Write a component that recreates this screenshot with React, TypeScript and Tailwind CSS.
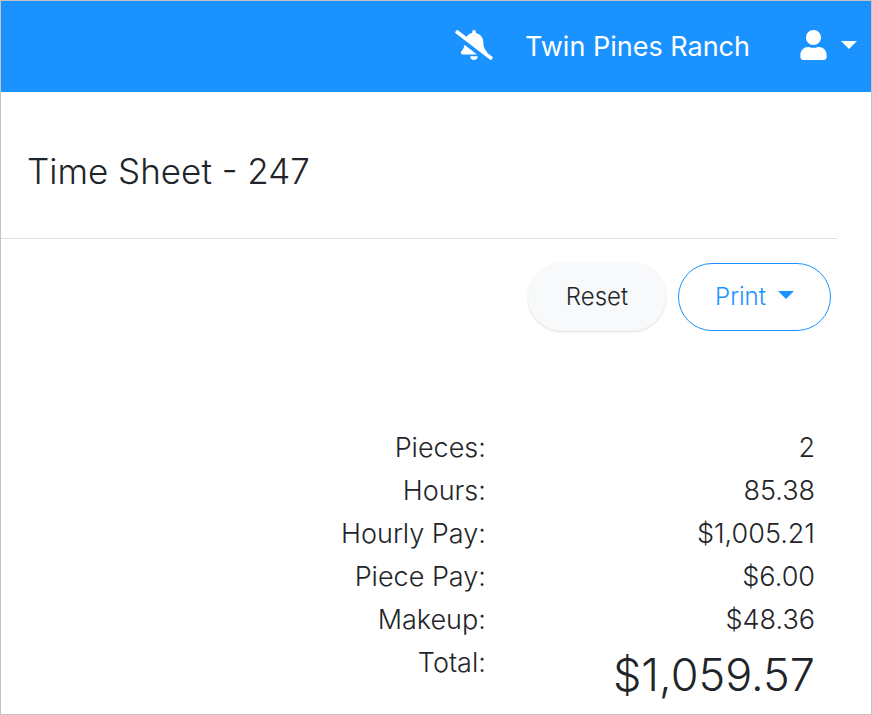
import { FaBellSlash, FaUser } from 'react-icons/fa';

const SUMMARY = [
  { label: 'Pieces:', value: '2' },
  { label: 'Hours:', value: '85.38' },
  { label: 'Hourly Pay:', value: '$1,005.21' },
  { label: 'Piece Pay:', value: '$6.00' },
  { label: 'Makeup:', value: '$48.36' },
];

function Caret() {
  return (
    <svg viewBox="0 0 16 8" className="mb-1 h-2 w-4" fill="currentColor" aria-hidden="true">
      <path d="M0 0h16L8 8z" />
    </svg>
  );
}

export default function App() {
  return (
    <div className="min-h-screen border border-[#c4c4c4] bg-white font-['Inter','Open_Sans',sans-serif] font-[350] text-[#212529]">
      <header className="flex h-[91px] items-center justify-end bg-[#1a92ff] pr-[14px] text-white">
        <button type="button" aria-label="Notifications off" className="mr-8">
          <FaBellSlash className="mb-1 h-[30px] w-[38px]" />
        </button>
        <a href="#" className="mr-[50px] text-[27px] leading-10 font-normal">Twin Pines Ranch</a>
        <button type="button" aria-label="Account" className="flex items-center gap-[14px]">
          <FaUser className="mb-1 h-[30px] w-[27px]" />
          <Caret />
        </button>
      </header>

      <main className="pr-[34px]">
        <div className="border-b border-[#dee2e6] px-[26px] pt-[54px] pb-[42px]">
          <h1 className="text-[35px] leading-[50px]">Time Sheet - 247</h1>
        </div>

        <div className="flex justify-end gap-3 pt-6 pr-[6px]">
          <button type="button" className="h-[68px] w-[138px] rounded-full bg-[#f8f9fa] text-[24px] shadow-sm">Reset</button>
          <button type="button" className="flex h-[68px] w-[153px] items-center justify-center gap-3 rounded-full border border-[#1a92ff] text-[24px] text-[#1a92ff]">
            Print
            <Caret />
          </button>
        </div>

        <table className="mt-[95px] w-full text-right text-[27px] leading-[43px]">
          <tbody>
            {SUMMARY.map((row) => (
              <tr key={row.label}>
                <th scope="row" className="w-[58%] p-0 text-right font-[350]">{row.label}</th>
                <td className="p-0 pr-[22px]">{row.value}</td>
              </tr>
            ))}
            <tr>
              <th scope="row" className="p-0 text-right align-top font-[350]">Total:</th>
              <td className="p-0 pr-[22px] text-[45px] leading-[68px]">$1,059.57</td>
            </tr>
          </tbody>
        </table>
      </main>
    </div>
  );
}
